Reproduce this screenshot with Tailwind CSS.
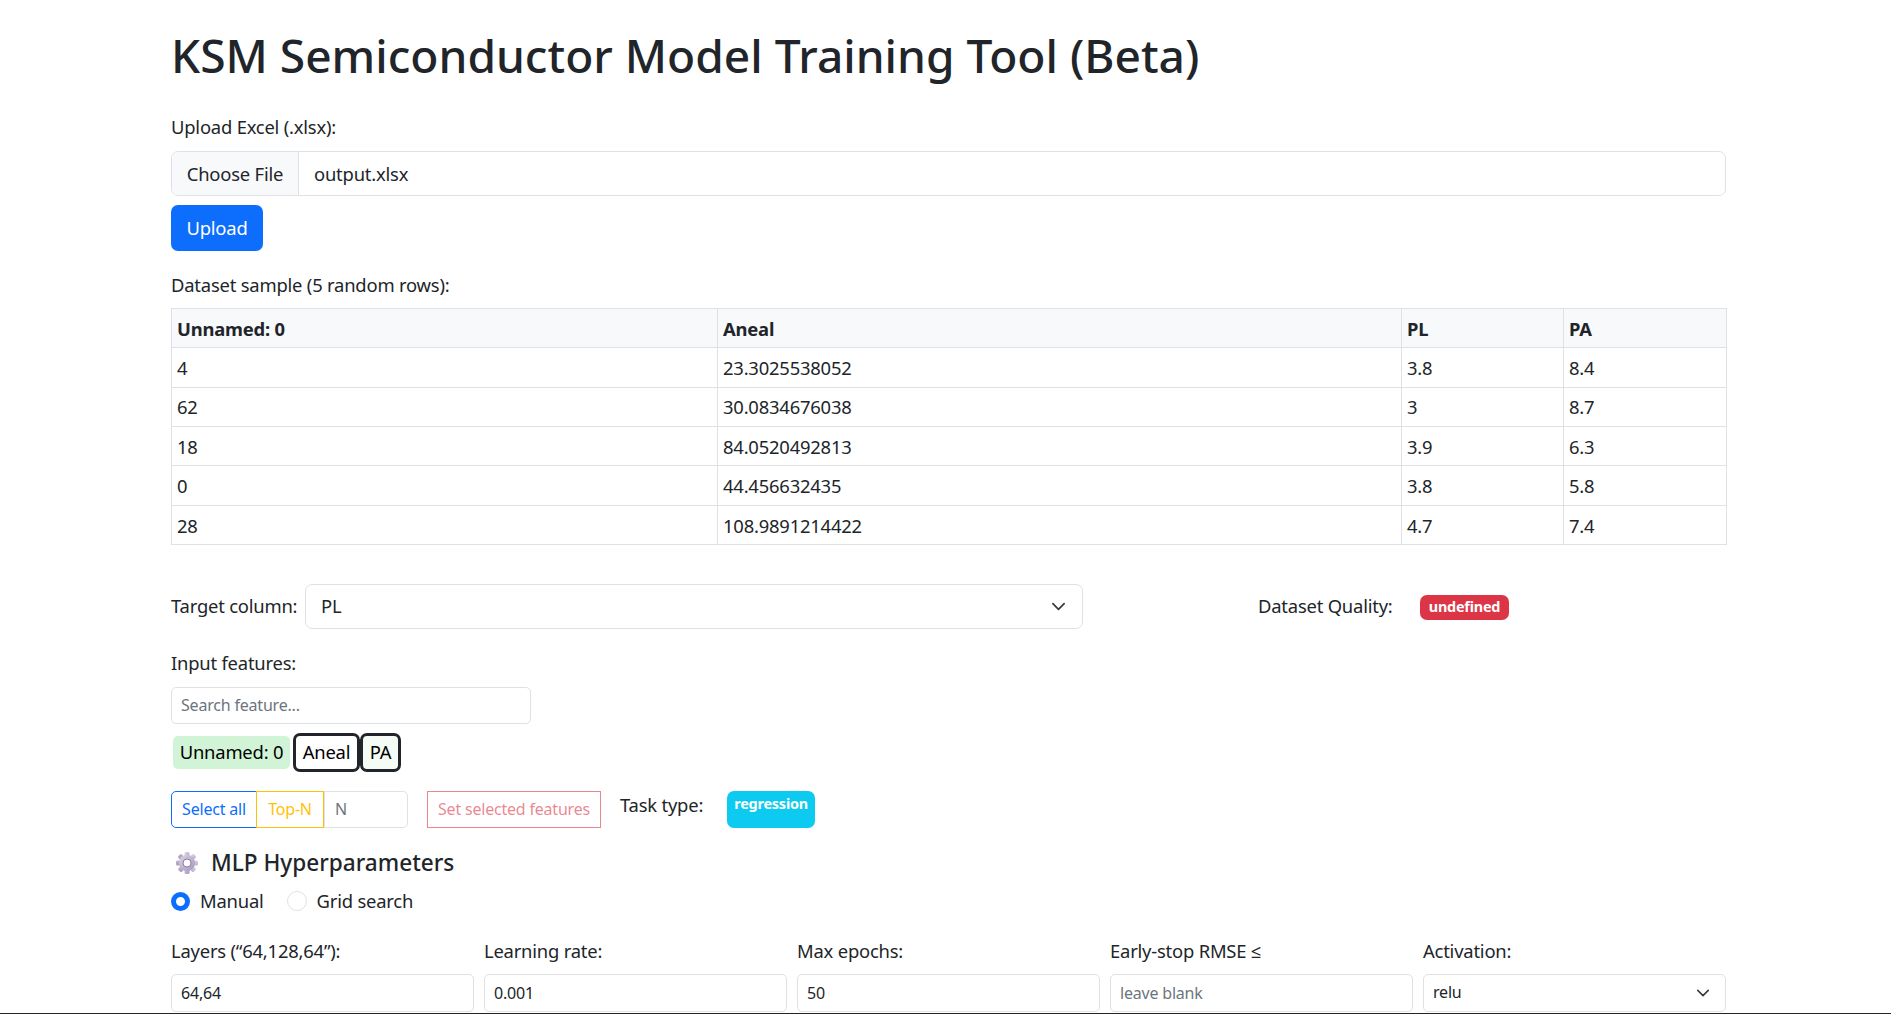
<!DOCTYPE html>
<html lang="en">
<head>
<meta charset="utf-8">
<title>KSM Semiconductor Model Training Tool</title>
<script src="https://cdn.jsdelivr.net/npm/@tailwindcss/browser@4"></script>
</head>
<body class="bg-white text-[#212529] text-[18.4px] tracking-[-0.2px] leading-[28.8px] font-['Noto_Sans','Open_Sans',sans-serif] overflow-hidden">
<div class="h-[1014px] overflow-hidden border-b border-[#212529] box-border">
<main class="w-[1555px] ml-[171px]">
  <h1 class="text-[46.1px] tracking-normal leading-[57.6px] font-medium pt-[27px] mb-[28px]">KSM Semiconductor Model Training Tool (Beta)</h1>

  <div class="mb-[10px]">Upload Excel (.xlsx):</div>
  <div class="flex h-[45px] border border-[#dee2e6] rounded-[7px] overflow-hidden">
    <div class="w-[127px] pt-px flex items-center justify-center bg-[#f8f9fa] border-r border-[#dee2e6]">Choose File</div>
    <div class="flex items-center pt-px pl-[15px]">output.xlsx</div>
  </div>
  <button class="block mt-[9px] w-[92px] h-[46px] rounded-[7px] bg-[#0d6efd] text-white">Upload</button>

  <div class="mt-[20px] mb-[8px]">Dataset sample (5 random rows):</div>
  <table class="w-[1555px] table-fixed border-collapse border border-[#dee2e6] [&_td]:pt-[2px] [&_th]:pt-[2px]">
    <colgroup><col class="w-[546px]"><col class="w-[684px]"><col class="w-[162px]"><col class="w-[163px]"></colgroup>
    <thead class="bg-[#f8f9fa]">
      <tr class="h-[39px] border-b border-[#dee2e6]"><th class="text-left px-[5px] font-bold border-r border-[#dee2e6]">Unnamed: 0</th><th class="text-left px-[5px] font-bold border-r border-[#dee2e6]">Aneal</th><th class="text-left px-[5px] font-bold border-r border-[#dee2e6]">PL</th><th class="text-left px-[5px] font-bold">PA</th></tr>
    </thead>
    <tbody>
      <tr class="h-[39.4px] border-b border-[#dee2e6]"><td class="px-[5px] border-r border-[#dee2e6]">4</td><td class="px-[5px] border-r border-[#dee2e6]">23.3025538052</td><td class="px-[5px] border-r border-[#dee2e6]">3.8</td><td class="px-[5px]">8.4</td></tr>
      <tr class="h-[39.4px] border-b border-[#dee2e6]"><td class="px-[5px] border-r border-[#dee2e6]">62</td><td class="px-[5px] border-r border-[#dee2e6]">30.0834676038</td><td class="px-[5px] border-r border-[#dee2e6]">3</td><td class="px-[5px]">8.7</td></tr>
      <tr class="h-[39.4px] border-b border-[#dee2e6]"><td class="px-[5px] border-r border-[#dee2e6]">18</td><td class="px-[5px] border-r border-[#dee2e6]">84.0520492813</td><td class="px-[5px] border-r border-[#dee2e6]">3.9</td><td class="px-[5px]">6.3</td></tr>
      <tr class="h-[39.4px] border-b border-[#dee2e6]"><td class="px-[5px] border-r border-[#dee2e6]">0</td><td class="px-[5px] border-r border-[#dee2e6]">44.456632435</td><td class="px-[5px] border-r border-[#dee2e6]">3.8</td><td class="px-[5px]">5.8</td></tr>
      <tr class="h-[39.4px]"><td class="px-[5px] border-r border-[#dee2e6]">28</td><td class="px-[5px] border-r border-[#dee2e6]">108.9891214422</td><td class="px-[5px] border-r border-[#dee2e6]">4.7</td><td class="px-[5px]">7.4</td></tr>
    </tbody>
  </table>

  <div class="flex items-center mt-[39px] h-[45px]">
    <span class="w-[134px] shrink-0 whitespace-nowrap">Target column:</span>
    <div class="relative w-[778px] h-[45px] shrink-0">
      <select class="w-full h-full appearance-none border border-[#dee2e6] rounded-[7px] pl-[15px] bg-white"><option>PL</option></select>
      <svg class="absolute right-[17px] top-[15px] w-[15px] h-[15px] pointer-events-none" viewBox="0 0 16 16" fill="none" stroke="#343a40" stroke-width="1.8" stroke-linecap="round" stroke-linejoin="round"><path d="M2 5l6 6 6-6"/></svg>
    </div>
    <span class="ml-[175px] w-[134px] shrink-0 whitespace-nowrap">Dataset Quality:</span>
    <span class="ml-[28px] mt-px w-[89px] h-[25px] flex items-center justify-center rounded-[7px] bg-[#dc3545] text-white text-[14.4px] font-bold leading-none">undefined</span>
  </div>

  <div class="mt-[20px] mb-[9px]">Input features:</div>
  <input class="block w-[360px] h-[37px] border border-[#dee2e6] rounded-[5px] px-[9px] text-[16px] placeholder:text-[#6c757d] outline-none" placeholder="Search feature...">
  <div class="flex items-center mt-[9px] h-[39px] text-black">
    <span class="ml-[2px] mr-[3px] h-[33px] w-[117px] shrink-0 whitespace-nowrap flex items-center justify-center rounded-[5px] bg-[#d1f4d6]">Unnamed: 0</span>
    <span class="h-[39px] w-[67px] flex items-center justify-center rounded-[7px] border-[3px] border-[#212529] bg-white">Aneal</span>
    <span class="h-[39px] w-[41px] flex items-center justify-center rounded-[7px] border-[3px] border-[#212529] bg-[#f4fcf5]">PA</span>
  </div>

  <div class="flex items-center mt-[19px] h-[37px] text-[16px]">
    <span class="h-full w-[86px] shrink-0 whitespace-nowrap flex items-center justify-center border border-[#0d6efd] rounded-l-[5px] text-[#0d6efd]">Select all</span>
    <span class="h-full w-[68px] shrink-0 -ml-px flex items-center justify-center border border-[#ffc107] text-[#ffc107]">Top-N</span>
    <input class="h-full w-[84px] shrink-0 border border-[#dee2e6] rounded-r-[5px] pl-[10px] placeholder:text-[#6c757d] outline-none" placeholder="N">
    <span class="h-full ml-[19px] w-[174px] shrink-0 whitespace-nowrap flex items-center justify-center border border-[#dc3545]/60 text-[#dc3545]/60">Set selected features</span>
    <span class="ml-[19px] shrink-0 self-start text-[18.4px] leading-[28px]">Task type:</span>
    <span class="ml-[24px] w-[88px] h-full shrink-0 flex justify-center pt-[4px] rounded-[7px] bg-[#0dcaf0] text-white text-[14.4px] font-bold leading-[18px]">regression</span>
  </div>

  <div class="flex items-center mt-[20px] h-[30px]">
    <svg class="ml-[4px] w-[24px] h-[24px]" viewBox="0 0 24 24">
      <defs><linearGradient id="g" x1="0" y1="0" x2="1" y2="1"><stop offset="0" stop-color="#d9d4e2"/><stop offset="1" stop-color="#a796bf"/></linearGradient></defs>
      <g fill="url(#g)">
        <rect x="9.5" y="1" width="5" height="22" rx="1.6"/>
        <rect x="9.5" y="1" width="5" height="22" rx="1.6" transform="rotate(45 12 12)"/>
        <rect x="9.5" y="1" width="5" height="22" rx="1.6" transform="rotate(90 12 12)"/>
        <rect x="9.5" y="1" width="5" height="22" rx="1.6" transform="rotate(135 12 12)"/>
        <circle cx="12" cy="12" r="8"/>
      </g>
      <circle cx="12" cy="12" r="4" fill="#fff" stroke="#8d7fa6" stroke-width="1"/>
    </svg>
    <h2 class="ml-[12px] text-[22.6px] tracking-normal leading-[30px] font-medium">MLP Hyperparameters</h2>
  </div>

  <div class="flex items-center mt-[9px] h-[29px]">
    <span class="w-[19px] h-[19px] rounded-full border-[5px] border-[#0d6efd] bg-white"></span>
    <span class="ml-[10px]">Manual</span>
    <span class="ml-[23px] w-[20px] h-[20px] rounded-full border border-[#dee2e6] bg-white"></span>
    <span class="ml-[10px]">Grid search</span>
  </div>

  <div class="grid grid-cols-5 gap-x-[10px] mt-[21px]">
    <div>
      <div class="mb-[8px]">Layers (“64,128,64”):</div>
      <input class="block w-full h-[38px] border border-[#dee2e6] rounded-[5px] px-[9px] text-[16px] outline-none" value="64,64">
    </div>
    <div>
      <div class="mb-[8px]">Learning rate:</div>
      <input class="block w-full h-[38px] border border-[#dee2e6] rounded-[5px] px-[9px] text-[16px] outline-none" value="0.001">
    </div>
    <div>
      <div class="mb-[8px]">Max epochs:</div>
      <input class="block w-full h-[38px] border border-[#dee2e6] rounded-[5px] px-[9px] text-[16px] outline-none" value="50">
    </div>
    <div>
      <div class="mb-[8px]">Early-stop RMSE ≤</div>
      <input class="block w-full h-[38px] border border-[#dee2e6] rounded-[5px] px-[9px] text-[16px] placeholder:text-[#6c757d] outline-none" placeholder="leave blank">
    </div>
    <div>
      <div class="mb-[8px]">Activation:</div>
      <div class="relative h-[38px]">
        <select class="w-full h-full appearance-none border border-[#dee2e6] rounded-[5px] pl-[9px] text-[16px] bg-white"><option>relu</option></select>
        <svg class="absolute right-[16px] top-[12px] w-[14px] h-[14px] pointer-events-none" viewBox="0 0 16 16" fill="none" stroke="#343a40" stroke-width="1.8" stroke-linecap="round" stroke-linejoin="round"><path d="M2 5l6 6 6-6"/></svg>
      </div>
    </div>
  </div>
</main>
</div>
</body>
</html>
